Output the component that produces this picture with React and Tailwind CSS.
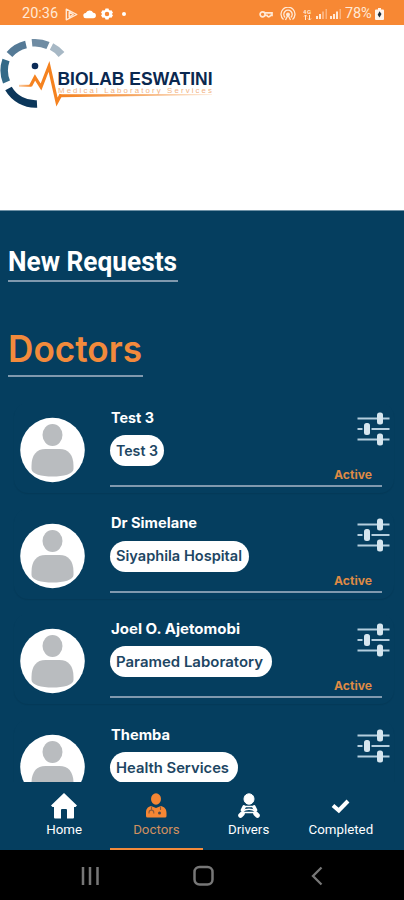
import React, { useState } from 'react';

const doctors = [
  { id: 1, name: 'Test 3', nameWidth: 43, place: 'Test 3', placeWidth: 42, chip: 'w-[54px]', status: 'Active' },
  { id: 2, name: 'Dr Simelane', nameWidth: 86, place: 'Siyaphila Hospital', placeWidth: 126, chip: 'w-[139px]', status: 'Active' },
  { id: 3, name: 'Joel O. Ajetomobi', nameWidth: 129, place: 'Paramed Laboratory', placeWidth: 147, chip: 'w-[162px]', status: 'Active' },
  { id: 4, name: 'Themba', nameWidth: 59, place: 'Health Services', placeWidth: 113, chip: 'w-[128px]' },
];

function StatusBar() {
  return (
    <div className="h-[25px] shrink-0 bg-[#f78834] flex items-center justify-between pl-[22px] pr-[20px] text-[#ffe9d6] font-['Roboto',sans-serif] text-[14.5px] leading-none">
      <div className="flex items-center pt-[3px]">
        <span className="w-[37px]">20:36</span>
        <svg className="ml-[6px]" width="13" height="13" viewBox="0 0 13 13" fill="none" stroke="currentColor" strokeWidth="1.4">
          <path d="M1.3 1.2 11.8 6.5 1.3 11.8Z M4.2 4 8.2 6.5 4.2 9Z" strokeLinejoin="round" />
        </svg>
        <svg className="ml-[5px]" width="13" height="10" viewBox="0 0 13 10" fill="#fff">
          <path d="M3 9.2A2.6 2.6 0 0 1 2.8 4 4 4 0 0 1 10.2 3.8 2.7 2.7 0 0 1 10.2 9.2Z" />
        </svg>
        <svg className="ml-[5px]" width="12" height="12" viewBox="0 0 24 24">
          <path fill="#fff" fillRule="evenodd" d="M9 1h6l1 3.2 1.8 1L21 4.4l3 5-2.4 2.4v.4L24 14.6l-3 5-3.2-.8-1.8 1L15 23H9l-1-3.2-1.8-1L3 19.6l-3-5 2.4-2.4v-.4L0 9.4l3-5 3.2.8 1.8-1Z M12 7.5a4.5 4.5 0 1 0 0 9 4.5 4.5 0 0 0 0-9Z" />
        </svg>
        <span className="ml-[9px] size-[4px] rounded-full bg-white" />
      </div>
      <div className="flex items-center pt-[3px]">
        <svg width="14" height="9" viewBox="0 0 14 9" fill="none" stroke="currentColor" strokeWidth="1.7">
          <circle cx="3.6" cy="4.3" r="2.5" />
          <path d="M6 2.8H13V5.4H11.5A1.8 1.8 0 0 1 8 5.4H6" />
        </svg>
        <svg className="ml-[7px]" width="16" height="14" viewBox="0 0 16 14" fill="none" stroke="currentColor" strokeWidth="1.3">
          <path d="M3.5 12.5A7 7 0 1 1 12.5 12.5M5.2 10.5A4.2 4.2 0 1 1 10.8 10.5" />
          <circle cx="8" cy="7.5" r="1.3" fill="currentColor" />
          <path d="M8 8 5.5 13M8 8 10.5 13" />
        </svg>
        <svg className="ml-[7px]" width="10" height="13" viewBox="0 0 10 13">
          <text x="0" y="5.5" fontSize="6" fontWeight="700" fill="currentColor" textLength="8">4G</text>
          <path d="M2.5 12V7M1 8.5 2.5 7 4 8.5M6.5 7V12M5 10.5 6.5 12 8 10.5" stroke="currentColor" fill="none" />
        </svg>
        <svg className="ml-[3px]" width="26" height="12" viewBox="0 0 26 12" fill="currentColor">
          <path d="M0 8h2v3H0zM3 6h2v5H3zM14 8h2v3h-2zM17 6h2v5h-2zM20 3.5h2V11h-2z" />
          <path opacity=".45" d="M6 3.5h2V11H6zM9.5 1h1.5v10h-1.5zM23.5 1h1.5v10h-1.5z" />
        </svg>
        <span className="ml-[3px] w-[28px] whitespace-nowrap text-[14.5px] tracking-[-0.2px]">78%</span>
        <svg className="ml-[2px]" width="9" height="12" viewBox="0 0 9 12">
          <path d="M3 0h3v1.5h2a1 1 0 0 1 1 1V11a1 1 0 0 1-1 1H1a1 1 0 0 1-1-1V2.5a1 1 0 0 1 1-1h2Z" fill="#fff5ec" />
          <path d="M4.5 3.2 6.5 6 4.5 9.5 2.7 6.8Z" fill="#20303a" />
        </svg>
      </div>
    </div>
  );
}

function Logo() {
  return (
    <svg width="216" height="74" viewBox="0 0 216 74" fill="none">
      <defs>
        <linearGradient id="pulse" x1="60" y1="0" x2="212" y2="0" gradientUnits="userSpaceOnUse">
          <stop offset="0" stopColor="#f5821f" />
          <stop offset=".45" stopColor="#f5a35d" />
          <stop offset="1" stopColor="#fdeee0" />
        </linearGradient>
        <linearGradient id="lead" x1="18" y1="0" x2="32" y2="0" gradientUnits="userSpaceOnUse">
          <stop offset="0" stopColor="#fbd3b0" />
          <stop offset="1" stopColor="#f5821f" />
        </linearGradient>
      </defs>
      <g strokeWidth="7.500">
        <path d="M51.500 11.500A31 31 0 0 1 61.500 19.500" stroke="#a7b8c5" />
        <path d="M32 7.800A31 31 0 0 1 48 10.500" stroke="#6f8ca3" />
        <path d="M9.500 19.500A31 31 0 0 1 26 9.500" stroke="#557a96" />
        <path d="M6.500 47A31 31 0 0 1 6 25" stroke="#346a87" />
        <path d="M37 69A31 31 0 0 1 8.500 53.500" stroke="#0b365a" />
      </g>
      <circle cx="35" cy="31" r="3.300" fill="#0b2b57" />
      <path d="M19 50.800H31" stroke="url(#lead)" strokeWidth="2" />
      <path d="M30.500 51 35 42.500 41 52 49 31.500 57 67 61 59.500" stroke="#f5821f" strokeWidth="3.200" strokeLinejoin="miter" />
      <path d="M59.500 59.200 212 59V60L60 62.200Z" fill="url(#pulse)" />
      <text x="57.500" y="49.800" fontFamily="Liberation Sans, sans-serif" fontWeight="700" fontSize="18" fill="#0a2850" textLength="155" lengthAdjust="spacingAndGlyphs">BIOLAB ESWATINI</text>
      <text x="58" y="58" fontFamily="Liberation Sans, sans-serif" fontSize="7.800" fill="#f1b384" textLength="154">Medical Laboratory Services</text>
    </svg>
  );
}

function Avatar() {
  return (
    <svg className="mt-[14px] shrink-0" width="66" height="66" viewBox="0 0 66 66">
      <circle cx="33.500" cy="33" r="32.300" fill="#fff" />
      <ellipse cx="33.500" cy="18" rx="10" ry="11" fill="#b9bcbf" />
      <path d="M12.500 49C12.500 38 17.500 32 26.500 32H40.500C49.500 32 54.500 38 54.500 49V52C54.500 57 44.500 59.500 33.500 59.500S12.500 57 12.500 52Z" fill="#b9bcbf" />
    </svg>
  );
}

function FilterIcon() {
  return (
    <svg width="34" height="34" viewBox="0 0 34 34">
      <path d="M0.500 6.500H20M26 6.500H32.500M0.500 17H5.500M14.500 17H32.500M0.500 27.500H20M26 27.500H32.500" stroke="#b4cede" strokeWidth="2" />
      <g fill="#d6e6ef">
        <rect x="20" y="0.500" width="6" height="12" rx="2.500" />
        <rect x="7" y="11" width="6" height="12" rx="2.500" />
        <rect x="20" y="21.500" width="6" height="12" rx="2.500" />
      </g>
    </svg>
  );
}

function Label({ text, width, size, weight, fill }) {
  return (
    <svg className="block overflow-visible" width={width} height="20">
      <text x="0" y="15" textLength={width} lengthAdjust="spacingAndGlyphs" fontFamily="Inter, sans-serif" fontSize={size} fontWeight={weight} fill={fill}>{text}</text>
    </svg>
  );
}

function DoctorRow({ doctor }) {
  return (
    <div className="h-[90px] mb-[15.700px] shrink-0 ml-[14px] mr-[10px] pl-[5px] flex rounded-[14px] shadow-[0_1px_1px_rgba(0,25,45,0.14)]">
      <Avatar />
      <div className="relative ml-[25px] w-[272px] h-[84px] border-b-2 border-[#8099ae]">
        <div className="pt-[4.500px] pl-px">
          <Label text={doctor.name} width={doctor.nameWidth} size={14.500} weight={700} fill="#fff" />
        </div>
        <div className={`mt-[7.500px] h-[31px] rounded-full bg-white pl-[6px] pt-[5.500px] ${doctor.chip}`}>
          <Label text={doctor.place} width={doctor.placeWidth} size={14.500} weight={600} fill="#1d4663" />
        </div>
        <button className="absolute left-[247px] top-[9px]">
          <FilterIcon />
        </button>
        {doctor.status && (
          <div className="absolute left-[224px] top-[61px]">
            <Label text={doctor.status} width={38} size={12} weight={700} fill="#de8a45" />
          </div>
        )}
      </div>
    </div>
  );
}

function TabIcon({ name }) {
  if (name === 'Home') {
    return (
      <svg width="28" height="28" viewBox="0 0 28 28" fill="#fff">
        <path d="M14 1 27 13.500 25.500 15H24V25.500A1 1 0 0 1 23 26.500H17V18A1 1 0 0 0 16 17H12A1 1 0 0 0 11 18V26.500H5A1 1 0 0 1 4 25.500V15H2.500L1 13.500Z" />
      </svg>
    );
  }
  if (name === 'Doctors') {
    return (
      <svg width="28" height="28" viewBox="0 0 28 28" fill="#f58634">
        <ellipse cx="14" cy="7" rx="5" ry="5.800" />
        <path d="M9 14 14 16 19 14C22.500 15 24.500 17 24.500 21V24A1.500 1.500 0 0 1 23 25.500H5.500A1.500 1.500 0 0 1 4 24V21C4 17 5.500 15 9 14Z" />
        <path d="M9.500 14.500V17.500M7 21.500V20.500A2.400 2.400 0 0 1 11.800 20.500V21.500M18.500 14.500V18" stroke="#8b5a3c" strokeWidth="1.100" fill="none" />
        <circle cx="17.500" cy="21" r="1.500" fill="#4d4a4c" />
      </svg>
    );
  }
  if (name === 'Drivers') {
    return (
      <svg width="28" height="28" viewBox="0 0 28 28" fill="none" stroke="#fff">
        <ellipse cx="14" cy="7" rx="5" ry="5.200" fill="#fff" />
        <path d="M9 15 7.500 18M19 15 20.500 18" strokeWidth="3.600" strokeLinecap="round" />
        <path d="M9 14.500H19M7.500 19.500C11 16.500 17 16.500 20.500 19.500M9 20.500H19" strokeWidth="1.600" />
        <path d="M7.500 21.500 5.500 23.500M20.500 21.500 22.500 23.500" strokeWidth="4.600" strokeLinecap="round" />
      </svg>
    );
  }
  return (
    <svg width="28" height="28" viewBox="0 0 28 28" fill="none" stroke="#fff" strokeWidth="4">
      <path d="M6 13.500 11.800 18.500 21 9" />
    </svg>
  );
}

function App() {
  const [tab, setTab] = useState('Doctors');

  return (
    <div className="w-[404px] h-[900px] overflow-hidden flex flex-col bg-[#053e5f]">
      <StatusBar />
      <header className="h-[185px] shrink-0 bg-white pt-[10px]">
        <Logo />
      </header>
      <main className="h-[572px] shrink-0 overflow-hidden flex flex-col border-t border-[#6f91a6]">
        <h2 className="ml-2 mt-[34px] h-[37px] w-[170px] shrink-0 border-b-2 border-[#8099ae]">
          <svg className="block overflow-visible" width="170" height="32">
            <text x="0" y="25.500" textLength="169" lengthAdjust="spacingAndGlyphs" fontFamily="Roboto, sans-serif" fontSize="27" fontWeight="700" fill="#fff">New Requests</text>
          </svg>
        </h2>
        <h1 className="ml-2 mt-[42px] h-[53px] w-[135px] shrink-0 border-b-2 border-[#8099ae]">
          <svg className="block overflow-visible" width="135" height="48">
            <text x="0" y="38" textLength="134" lengthAdjust="spacingAndGlyphs" fontFamily="Inter, sans-serif" fontSize="36.500" fontWeight="600" fill="#f28a3c">Doctors</text>
          </svg>
        </h1>
        <div className="mt-[26px] flex flex-col">
          {doctors.map(d => <DoctorRow key={d.id} doctor={d} />)}
        </div>
      </main>
      <nav className="h-[68px] shrink-0 flex pl-[18px] pr-[17px]">
        {['Home', 'Doctors', 'Drivers', 'Completed'].map(t => (
          <button
            key={t}
            onClick={() => setTab(t)}
            className={`flex-1 flex flex-col items-center pt-[10px] border-b-2 font-['Roboto',sans-serif] text-[13.3px] leading-[16px] ${tab === t ? 'border-[#f28a3c] text-[#d09060]' : 'border-transparent text-white'}`}
          >
            <TabIcon name={t} />
            <span className="mt-[2px]">{t}</span>
          </button>
        ))}
      </nav>
      <footer className="flex-1 bg-black flex items-center pt-px text-[#777]">
        <svg className="ml-[80px]" width="20" height="20" viewBox="0 0 20 20" stroke="currentColor" strokeWidth="2.500">
          <path d="M3 1V19M10 1V19M17.500 1V19" />
        </svg>
        <svg className="ml-[93px]" width="22" height="22" viewBox="0 0 22 22" fill="none" stroke="currentColor" strokeWidth="2.500">
          <rect x="1.500" y="2" width="18" height="17.500" rx="5" />
        </svg>
        <svg className="ml-[95px]" width="14" height="20" viewBox="0 0 14 20" fill="none" stroke="currentColor" strokeWidth="2.300">
          <path d="M11.500 1.500 3 10 11.500 18.500" />
        </svg>
      </footer>
    </div>
  );
}

export default App;
